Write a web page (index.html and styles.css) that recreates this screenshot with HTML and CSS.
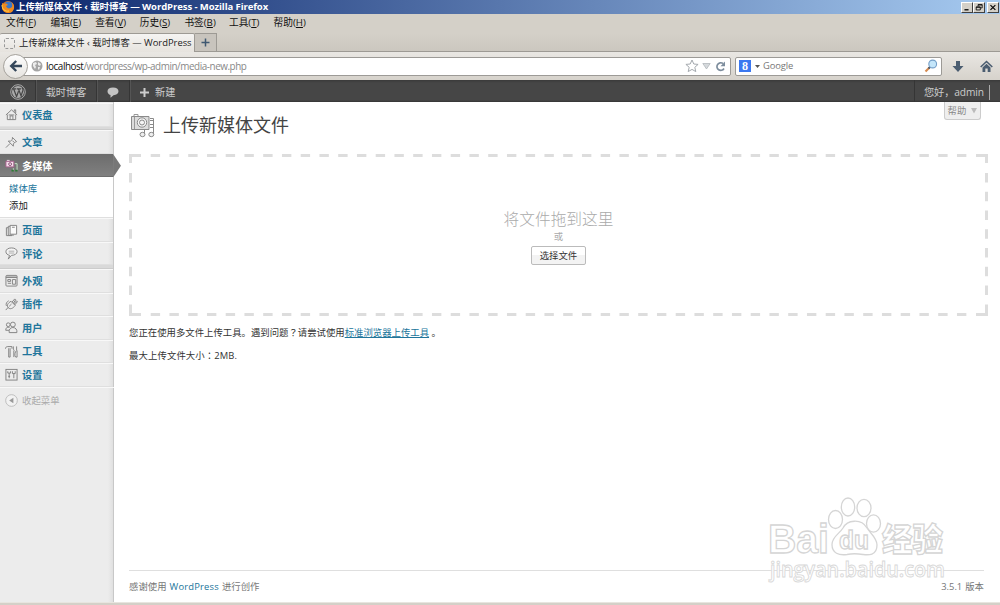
FILE: index.html
```
<!DOCTYPE html>
<html>
<head>
    <meta charset="utf-8">
    <title>上传新媒体文件 ‹ 载时博客 — WordPress</title>
    <link rel="stylesheet" href="styles.css">
</head>
<body>
    <div class="titlebar">
        <svg class="firefox" viewBox="0 0 14 14">
            <circle cx="7" cy="7" r="6" fill="#e8730c"/>
            <circle cx="7.5" cy="5.5" r="4" fill="#3a78c8"/>
            <path d="M1 3l2 1c2-1 3 0 4 1L5 6c1 3 4 3 6 1 1-2 0-4-1-5 4 2 4 7 1 10-3 2-8 1-10-3z" fill="#f08a1d"/>
            <path d="M1 5c0 4 3 7 7 6" stroke="#ffd24a" fill="none"/>
        </svg>
        <span class="title-text">上传新媒体文件 ‹ 载时博客 — WordPress - Mozilla Firefox</span>
        <div class="win-buttons">
            <button class="win-btn"><svg viewBox="0 0 12 11"><path d="M3 8.3h5" stroke="#000" stroke-width="1.6"/></svg></button>
            <button class="win-btn"><svg viewBox="0 0 12 11"><path d="M5 4V2h5v4H8M5 2.4h5M2.7 4.8h5v3.7h-5zM2.7 5.2h5" stroke="#000" fill="none"/></svg></button>
            <button class="win-btn btn-close"><svg viewBox="0 0 12 11"><path d="M3 2.5l6 6M9 2.5l-6 6" stroke="#000" stroke-width="1.4"/></svg></button>
        </div>
    </div>

    <div class="menubar">
        <span>文件(<u>F</u>)</span>
        <span>编辑(<u>E</u>)</span>
        <span>查看(<u>V</u>)</span>
        <span>历史(<u>S</u>)</span>
        <span>书签(<u>B</u>)</span>
        <span>工具(<u>T</u>)</span>
        <span>帮助(<u>H</u>)</span>
    </div>

    <div class="tabs">
        <div class="tab">
            <span class="tab-icon"></span>
            <span class="tab-text">上传新媒体文件 ‹ 载时博客 — WordPress</span>
        </div>
        <div class="tab-new"><svg width="9" height="9" viewBox="0 0 9 9"><path d="M4.5 .5v8M.5 4.5h8" stroke="#3f5871" stroke-width="1.5"/></svg></div>
    </div>

    <div class="toolbar">
        <div class="back"><svg width="14" height="14" viewBox="0 0 14 14"><path d="M13 7H3M7.2 2L2.2 7l5 5" fill="none" stroke="#35475b" stroke-width="2.4"/></svg></div>
        <div class="urlbar">
            <svg class="globe" width="12" height="12" viewBox="0 0 12 12"><circle cx="6" cy="6" r="5.5" fill="#a5a5a5"/><path d="M2 3l3-1 1 2-2 1 1 2-1 2-2-3zM7 2l3 2-1 2-2-1zM7 7l2 0-1 3-1-1z" fill="#ececec"/></svg>
            <span class="url"><b>localhost</b>/wordpress/wp-admin/media-new.php</span>
            <svg class="star" width="14" height="14" viewBox="0 0 14 14"><path d="M7 1l1.8 4 4.3.4-3.3 2.9 1 4.3L7 10.4l-3.8 2.2 1-4.3L.9 5.4 5.2 5z" fill="#fff" stroke="#a4a9ae"/></svg>
            <svg class="drop" width="9" height="7" viewBox="0 0 9 7"><path d="M.8 .5h7.4L4.5 6z" fill="#d5d9dc" stroke="#aab0b5" stroke-width=".7"/></svg>
            <svg class="reload" width="11" height="11" viewBox="0 0 11 11"><path d="M9 7.5A3.8 3.8 0 1 1 8 2.5" fill="none" stroke="#7d8d9d" stroke-width="1.7"/><path d="M10 .5v4.8H5.5z" fill="#7d8d9d"/></svg>
        </div>
        <div class="searchbar">
            <span class="g-logo">8</span>
            <svg class="caret" width="5" height="3" viewBox="0 0 5 3"><path d="M0 0h5L2.5 3z" fill="#555"/></svg>
            <span class="g-text">Google</span>
            <svg width="14" height="14" viewBox="0 0 14 14"><path d="M1.5 12.5L5.5 8.5" stroke="#d68a4e" stroke-width="2.2"/><path d="M4.5 9.5l2-2" stroke="#456" stroke-width="1.8"/><circle cx="8.7" cy="5" r="3.9" fill="#c4e6fa" stroke="#759fc8" stroke-width="1.1"/></svg>
        </div>
        <svg class="download" width="12" height="13" viewBox="0 0 12 13"><path d="M4 1h4v5h3.5L6 12 .5 6H4z" fill="#4b5d70"/></svg>
        <svg class="home" width="13" height="13" viewBox="0 0 13 13"><path d="M.7 7L6.5 1.5 12.3 7" fill="none" stroke="#4b5d70" stroke-width="1.6"/><path d="M2.5 7.5l4-3.8 4 3.8V12H7.7V8.5H5.3V12H2.5z" fill="#4b5d70"/></svg>
    </div>

    <div class="adminbar">
        <div class="ab-item ab-logo">
            <svg width="16" height="16" viewBox="0 0 16 16"><circle cx="8" cy="8" r="7.3" fill="none" stroke="#aaa"/><circle cx="8" cy="8" r="6" fill="#aaa"/><path d="M2.5 4.9h3.8M7 4.9h4M3.7 5l3 8M8.5 5l3 8M6.5 12.8l2-5.5M11 12l1.9-5.5c.4-1-.3-2-1-2.5" fill="none" stroke="#464646" stroke-width="1.2"/></svg>
        </div>
        <div class="ab-item ab-site">载时博客</div>
        <div class="ab-item ab-comment"><svg width="12" height="11" viewBox="0 0 12 11"><path d="M6 .5c3.5 0 5.5 1.5 5.5 3.8S9.5 8 6.5 8.2L3.5 10.7V8C1.5 7.5.5 6 .5 4.3.5 2 2.5.5 6 .5z" fill="#c4c4c4"/></svg></div>
        <div class="ab-item ab-new"><svg width="9" height="9" viewBox="0 0 9 9"><path d="M4.5 0v9M0 4.5h9" stroke="#ccc" stroke-width="2"/></svg><span>新建</span></div>
        <div class="ab-user"><span>您好，admin</span><i></i></div>
    </div>

    <div class="wrap">
        <div class="sidebar">
            <div class="item">
                <svg viewBox="0 0 14 14"><path d="M1 7.5L7 2l6 5.5M2.5 7v5.5h9V7M10 4V2h1.5v3.5M5.5 12.5V8.5h3v4M4 7.5h6"/></svg>
                <span>仪表盘</span>
            </div>
            <div class="sep"></div>
            <div class="item">
                <svg viewBox="0 0 14 14"><path d="M8 1.5l4.5 4.5-1.5.5-2 2v2.5l-5.500-5.500h2.500l2-2zM5.500 8L1 12.500M8 5l2 2"/></svg>
                <span>文章</span>
            </div>
            <div class="item current">
                <svg viewBox="0 0 14 14"><path d="M1 2.5h8.5v6H1z" fill="#f4dcea" stroke="#a8608d"/><path d="M2 1.5h3" stroke="#f4dcea"/><circle cx="5.5" cy="5.500" r="1.500" fill="#fff" stroke="#7c3a64"/><path d="M10.500 5h2.500v7M9 10v2.500" stroke="#c5e8c5"/><path d="M7 12.500h2.500M11 12.500h2.500" stroke="#2d7a35" stroke-width="2"/></svg>
                <span>多媒体</span>
                <svg class="arrow" viewBox="0 0 8 24"><path d="M0 0l8 12-8 12z"/></svg>
            </div>
            <div class="submenu">
                <a>媒体库</a>
                <a class="on">添加</a>
            </div>
            <div class="item">
                <svg viewBox="0 0 14 14"><path d="M5.5 1.5h7v9.5h-7z" fill="#fafafa"/><path d="M5.5 2.5h-2v9.5h6M3.5 4H1.500v8.500h6M7.500 3.500h3"/></svg>
                <span>页面</span>
            </div>
            <div class="item">
                <svg viewBox="0 0 14 14"><path d="M7 1c3.7 0 6 1.7 6 4s-2.500 4-6 4L3.500 13 5 9C2.500 8.500 1 7 1 5c0-2.300 2.300-4 6-4z" fill="#f4f4f4"/><path d="M4 4.500h6M4 6.500h6" stroke="#aaa"/></svg>
                <span>评论</span>
            </div>
            <div class="sep"></div>
            <div class="item">
                <svg viewBox="0 0 14 14"><rect x="1" y="1.5" width="12" height="11.5" rx="1"/><path d="M1 3.5h12" stroke-width="1.5"/><path d="M3 6h3v2H3zM3 10h3.5M8 6h3.5v5H8z"/></svg>
                <span>外观</span>
            </div>
            <div class="item">
                <svg viewBox="0 0 14 14"><path d="M.8 13l2.7-3M3.5 10.5C1.500 8 3 5.500 6.500 3.500l4.500 4.500c-2.500 3.500-5.500 4.500-7.500 2.500zM7.500 4.500L10.500 1l1 1-2.500 3.500M9.500 6.500L12.500 3l.8 1-2.800 3.500M4.500 9L7 6.500M1.500 8.500C.5 6 2 4 4 3"/></svg>
                <span>插件</span>
            </div>
            <div class="item">
                <svg viewBox="0 0 14 14"><circle cx="8.5" cy="3.8" r="2.6"/><circle cx="3.5" cy="4" r="2"/><path d="M4.5 12.5c-.5-3 1-5.500 4-5.500s4.800 2.500 4.300 5.500zM.8 10C.8 7.500 2 6.200 5 6.800M.8 10h3.700"/></svg>
                <span>用户</span>
            </div>
            <div class="item">
                <svg viewBox="0 0 14 14"><path d="M.5 4c0-1.5 1-2.300 2.500-2.300h4.500V4M4 3.500V13h1.500V3.500M9 1.500v3l1 1.500M12.500 1.500v4M12.500 6c-2 1-2.500 6-1 7h1.500V6zM9.500 6v7"/></svg>
                <span>工具</span>
            </div>
            <div class="item">
                <svg viewBox="0 0 14 14"><rect x="1" y="1.5" width="12" height="11.5"/><path d="M3 3.5v2h3v-2M4.5 5.5V11M3.5 9h2M8 3.500V6h3V3.500M9.500 6v5"/></svg>
                <span>设置</span>
            </div>
            <div class="collapse">
                <svg viewBox="0 0 14 14"><circle cx="7" cy="7" r="6.3" fill="#f2f2f2" stroke="#bbb"/><path d="M9 4v6L4.5 7z" fill="#999" stroke="none"/></svg>
                <span>收起菜单</span>
            </div>
        </div>

        <div class="content">
            <div class="help">帮助<svg width="6" height="6" viewBox="0 0 6 6"><path d="M0 0h6L3 5.5z" fill="#bbb"/></svg></div>
            <div class="heading">
                <svg width="26" height="26" viewBox="0 0 26 26" fill="none" stroke="#8a8a8a">
                    <path d="M1.5 3.5h17.5v13H1.5z" fill="#dcdcdc"/>
                    <path d="M4 3V1.5h4V3M4.5 4v12" stroke="#999"/>
                    <circle cx="12" cy="9.5" r="4.7" fill="#f5f5f5"/>
                    <circle cx="12" cy="9.5" r="2.5"/>
                    <path d="M20 5.5h3.5v16M20 7.5h3M20 11.5h3M20 14.5h3M14.5 22v-5.5h3"/>
                    <ellipse cx="12.5" cy="21.5" rx="2.5" ry="2.2" fill="#eee"/>
                    <ellipse cx="21.3" cy="21.5" rx="2.5" ry="2.2" fill="#eee"/>
                </svg>
                <h2>上传新媒体文件</h2>
            </div>
            <div class="drop-area">
                <svg class="dashes" width="859" height="162" viewBox="0 0 859 162">
                    <path d="M0 1.5h12M847 1.5h12M0 160.5h12M847 160.5h12M1.5 0v9M857.5 0v9M1.5 150.5v11.5M857.5 150.5v11.5"/>
                    <path class="dash" d="M21.7 1.5H838M21.7 160.5H838M1.5 19v122M857.5 19v122"/>
                </svg>
                <p class="drop-title">将文件拖到这里</p>
                <p class="drop-or">或</p>
                <button class="choose">选择文件</button>
            </div>
            <p class="note">您正在使用多文件上传工具。遇到问题<span class="punct">？</span>请尝试使用<a>标准浏览器上传工具</a> 。</p>
            <p class="note size">最大上传文件大小<span class="punct">：</span>2MB.</p>
            <div class="footer">
                <span>感谢使用 <a>WordPress</a> 进行创作</span>
                <span>3.5.1 版本</span>
            </div>
        </div>
    </div>
    <div class="statusbar"></div>

    <svg class="watermark" width="190" height="95" viewBox="0 0 190 95">
        <text x="2" y="58" class="wm-bai" textLength="61" lengthAdjust="spacingAndGlyphs">Bai</text>
        <ellipse cx="69.5" cy="24.5" rx="7" ry="9"/>
        <ellipse cx="82" cy="12" rx="6.7" ry="9"/>
        <ellipse cx="98" cy="13" rx="7" ry="8.7"/>
        <ellipse cx="107.5" cy="28.5" rx="7" ry="8.7"/>
        <path d="M77 33c4-8 18-10 24 0 3 5 10 10 10 17 0 11-9 10-14 9.5-6-1-11-1-16 0-8 1-15-1-15-10 0-8 7-10 11-16.5z"/>
        <text x="73" y="54" class="wm-du" textLength="30" lengthAdjust="spacingAndGlyphs">du</text>
        <text x="116" y="56" class="wm-cn" textLength="61" lengthAdjust="spacingAndGlyphs">经验</text>
        <text x="4" y="82" class="wm-url" textLength="175" lengthAdjust="spacingAndGlyphs">jingyan.baidu.com</text>
    </svg>
</body>
</html>
```
FILE: styles.css
```
/* reset */
* {
    box-sizing: border-box;
}

body {
    margin: 0;
    height: 605px;
    overflow: hidden;
    position: relative;
    display: flex;
    flex-direction: column;
    font-family: "Open Sans", "Noto Sans CJK SC", sans-serif;
    font-size: 9.4px;
    line-height: 14px;
    color: #333;
    background-color: #fff;
    white-space: nowrap;
}

p, h2 {
    margin: 0;
}

svg {
    flex-shrink: 0;
}

/* centered full-width marks */
.punct {
    font-family: "Noto Sans CJK TC", sans-serif;
    line-height: 0;
}

/* browser */
.titlebar {
    height: 14px;
    flex-shrink: 0;
    display: flex;
    align-items: center;
    padding: 0 1px;
    background: linear-gradient(to right, #0a246a, #a6caf0);
    color: #fff;
    font-weight: bold;
}

.firefox {
    width: 14px;
    height: 14px;
    margin-right: 1px;
}

.title-text {
    flex-grow: 1;
    font-size: 9.5px;
    letter-spacing: -0.08px;
}

.win-buttons {
    display: flex;
}

.win-btn {
    width: 12px;
    height: 11px;
    padding: 0;
    border: 1px solid;
    border-color: #fff #404040 #404040 #fff;
    background-color: #d4d0c8;
    display: flex;
}

.btn-close {
    margin-left: 2px;
}

.menubar {
    height: 19px;
    flex-shrink: 0;
    padding: 2px 6px 0;
    display: flex;
    gap: 13px;
    background-color: #d4d0c8;
    color: #111;
}

.menubar span {
    width: 31.6px;
    font-size: 9.7px;
}

.tabs {
    height: 19px;
    flex-shrink: 0;
    display: flex;
    background: linear-gradient(#d4d0c8, #cbc7bf);
    border-bottom: 1px solid #9d9a94;
}

.tab {
    width: 195px;
    height: 19px;
    display: flex;
    align-items: center;
    padding-left: 4px;
    border: 1px solid #9d9a94;
    border-width: 1px 1px 0 0;
    border-radius: 2px 2px 0 0;
    background: linear-gradient(#f5f4f2, #e6e3de);
    color: #222;
}

.tab-icon {
    width: 11px;
    height: 11px;
    border: 1px dashed #999;
    border-radius: 2px;
    margin-right: 4px;
}

.tab-new {
    width: 22px;
    height: 18px;
    display: flex;
    align-items: center;
    justify-content: center;
    border: 1px solid #9d9a94;
    border-width: 1px 1px 0 0;
    background-color: #c8c4bd;
}

.toolbar {
    height: 28px;
    flex-shrink: 0;
    display: flex;
    align-items: center;
    padding-left: 3px;
    background: linear-gradient(#e9e7e3, #d6d2cb);
}

.back {
    width: 25px;
    height: 25px;
    flex-shrink: 0;
    border: 1px solid #a5a29c;
    border-radius: 50%;
    display: flex;
    align-items: center;
    justify-content: center;
    background: linear-gradient(#fdfdfd, #e6e4e0);
    z-index: 1;
}

.urlbar, .searchbar {
    height: 19px;
    display: flex;
    align-items: center;
    border: 1px solid #9c9a96;
    border-radius: 2px;
    background-color: #fff;
}

.urlbar {
    width: 709px;
    margin-left: -6px;
    padding: 0 4px 0 8px;
}

.url {
    flex-grow: 1;
    margin-left: 3px;
    color: #888;
    font-size: 9.9px;
    letter-spacing: -0.44px;
}

.url b {
    font-weight: normal;
    color: #111;
}

.star {
    margin-right: -1px;
    position: relative;
    left: 2px;
}

.drop {
    margin: 0 4px 0 6px;
}

.searchbar {
    width: 207px;
    margin-left: 4px;
    padding: 0 3px;
    color: #777;
}

.g-logo {
    width: 12px;
    height: 12px;
    background-color: #3b78f0;
    color: #fff;
    font: bold 12px/12px "Liberation Serif", serif;
    text-align: center;
}

.caret {
    margin: 0 3px 0 4px;
}

.g-text {
    flex-grow: 1;
    letter-spacing: -0.1px;
}

.download {
    margin-left: 10px;
}

.home {
    margin-left: 16px;
}

/* admin bar */
.adminbar {
    height: 22px;
    flex-shrink: 0;
    display: flex;
    background: linear-gradient(#3a3a3a, #464646 3px, #464646 20px, #333);
    color: #ccc;
    font-size: 10.2px;
}

.ab-item {
    display: flex;
    align-items: center;
    justify-content: center;
    height: 22px;
    padding-top: 2px;
    border-right: 1px solid #353535;
    box-shadow: 1px 0 #555;
}

.ab-logo {
    width: 36px;
}

.ab-site {
    width: 61px;
}

.ab-comment {
    width: 33px;
}

.ab-new {
    border: none;
    box-shadow: none;
    padding-left: 10px;
    gap: 6px;
}

.ab-user {
    margin-left: auto;
    width: 86px;
    padding: 2px 0 0 9px;
    display: flex;
    align-items: center;
    border-left: 1px solid #353535;
}

.ab-user span {
    letter-spacing: -0.1px;
}

.ab-user i {
    width: 1px;
    height: 15px;
    margin-left: 5px;
    background-color: #aaa;
}

/* sidebar */
.wrap {
    flex-grow: 1;
    display: flex;
}

.sidebar {
    width: 114px;
    flex-shrink: 0;
    padding-top: 1px;
    background: linear-gradient(to right, #ececec 108px, #e0e0e0 113px, #c8c8c8 113px);
}

.item {
    height: 23.5px;
    position: relative;
    display: flex;
    align-items: center;
    width: 113px;
    padding-left: 5px;
    gap: 4px;
    border-top: 1px solid #f8f8f8;
    border-bottom: 1px solid #dfdfdf;
    color: #21759b;
    font-size: 10.2px;
    font-weight: bold;
}

.item svg, .collapse svg {
    width: 13px;
    height: 13px;
    fill: none;
    stroke: #808080;
}

.sep {
    height: 3.8px;
    width: 113px;
    background-color: #d9d9d9;
    border-bottom: 1px solid #ccc;
}

.current {
    background: linear-gradient(#6d6d6d, #808080);
    border-color: #6d6d6d;
    color: #fff;
}

.item .arrow {
    position: absolute;
    left: 113px;
    top: -1px;
    width: 8px;
    height: 23.5px;
    fill: #777;
    stroke: none;
}

.submenu {
    width: 113px;
    height: 41px;
    padding: 3px 9px 0;
    display: flex;
    flex-direction: column;
    background-color: #fff;
    border-bottom: 1px solid #dfdfdf;
    color: #21759b;
    line-height: 17px;
}

.submenu .on {
    color: #222;
}

.collapse {
    height: 27px;
    display: flex;
    align-items: center;
    padding-left: 5px;
    gap: 4px;
    border-top: 1px solid #f8f8f8;
    color: #aaa;
}

/* content */
.content {
    position: relative;
    flex-grow: 1;
    display: flex;
    flex-direction: column;
    padding: 10px 12px 0 15px;
}

.help {
    position: absolute;
    top: 0;
    right: 19px;
    width: 37px;
    height: 18px;
    display: flex;
    align-items: center;
    justify-content: center;
    gap: 5px;
    border: 1px solid #ccc;
    border-top: none;
    border-radius: 0 0 3px 3px;
    background-color: #eee;
    color: #888;
}

.heading {
    display: flex;
    align-items: center;
    height: 28px;
    padding-left: 1px;
    gap: 7px;
}

.heading h2 {
    margin-top: -2px;
    font-size: 18px;
    font-weight: 400;
    line-height: 26px;
    color: #444;
}

.drop-area {
    position: relative;
    width: 859px;
    height: 162px;
    margin-top: 14px;
    padding-top: 54px;
    display: flex;
    flex-direction: column;
    align-items: center;
    color: #aaa;
}

.dashes {
    position: absolute;
    left: 0;
    top: 0;
    stroke: #ddd;
    stroke-width: 3;
    fill: none;
}

.dash {
    stroke-dasharray: 9.4 9.35;
}

.drop-title {
    font-size: 15.7px;
    font-weight: 300;
    line-height: 22px;
}

.choose {
    width: 55px;
    height: 19px;
    margin-top: 2px;
    padding: 0;
    border: 1px solid #bbb;
    border-radius: 2px;
    background: linear-gradient(#fff 50%, #f3f3f3 50%);
    color: #333;
    font: inherit;
}

.note {
    height: 14px;
    margin-top: 10px;
}

.note a {
    color: #21759b;
    text-decoration: underline;
}

.size {
    margin-top: 9px;
    letter-spacing: 0.1px;
}

.footer {
    width: 855px;
    margin-top: auto;
    height: 32px;
    padding-top: 9px;
    display: flex;
    justify-content: space-between;
    border-top: 1px solid #dfdfdf;
    color: #777;
    word-spacing: 0.6px;
}

.footer a {
    color: #21759b;
    letter-spacing: 0.2px;
}

.statusbar {
    height: 3px;
    flex-shrink: 0;
    background-color: #d4d0c8;
    border-top: 1px solid #e8e5df;
}

.watermark {
    position: absolute;
    left: 766px;
    top: 495px;
    fill: #fff;
    stroke: #d5d5d5;
    stroke-width: 1.3;
}

.wm-bai {
    font: bold 41px "Liberation Sans", sans-serif;
}

.wm-du {
    font: bold 25px "Liberation Sans", sans-serif;
}

.wm-cn {
    font: 900 32px "Noto Sans CJK SC", sans-serif;
}

.wm-url {
    font: 600 21px "Open Sans", sans-serif;
    stroke: #d8d8d8;
    stroke-width: 0.9;
}
```
